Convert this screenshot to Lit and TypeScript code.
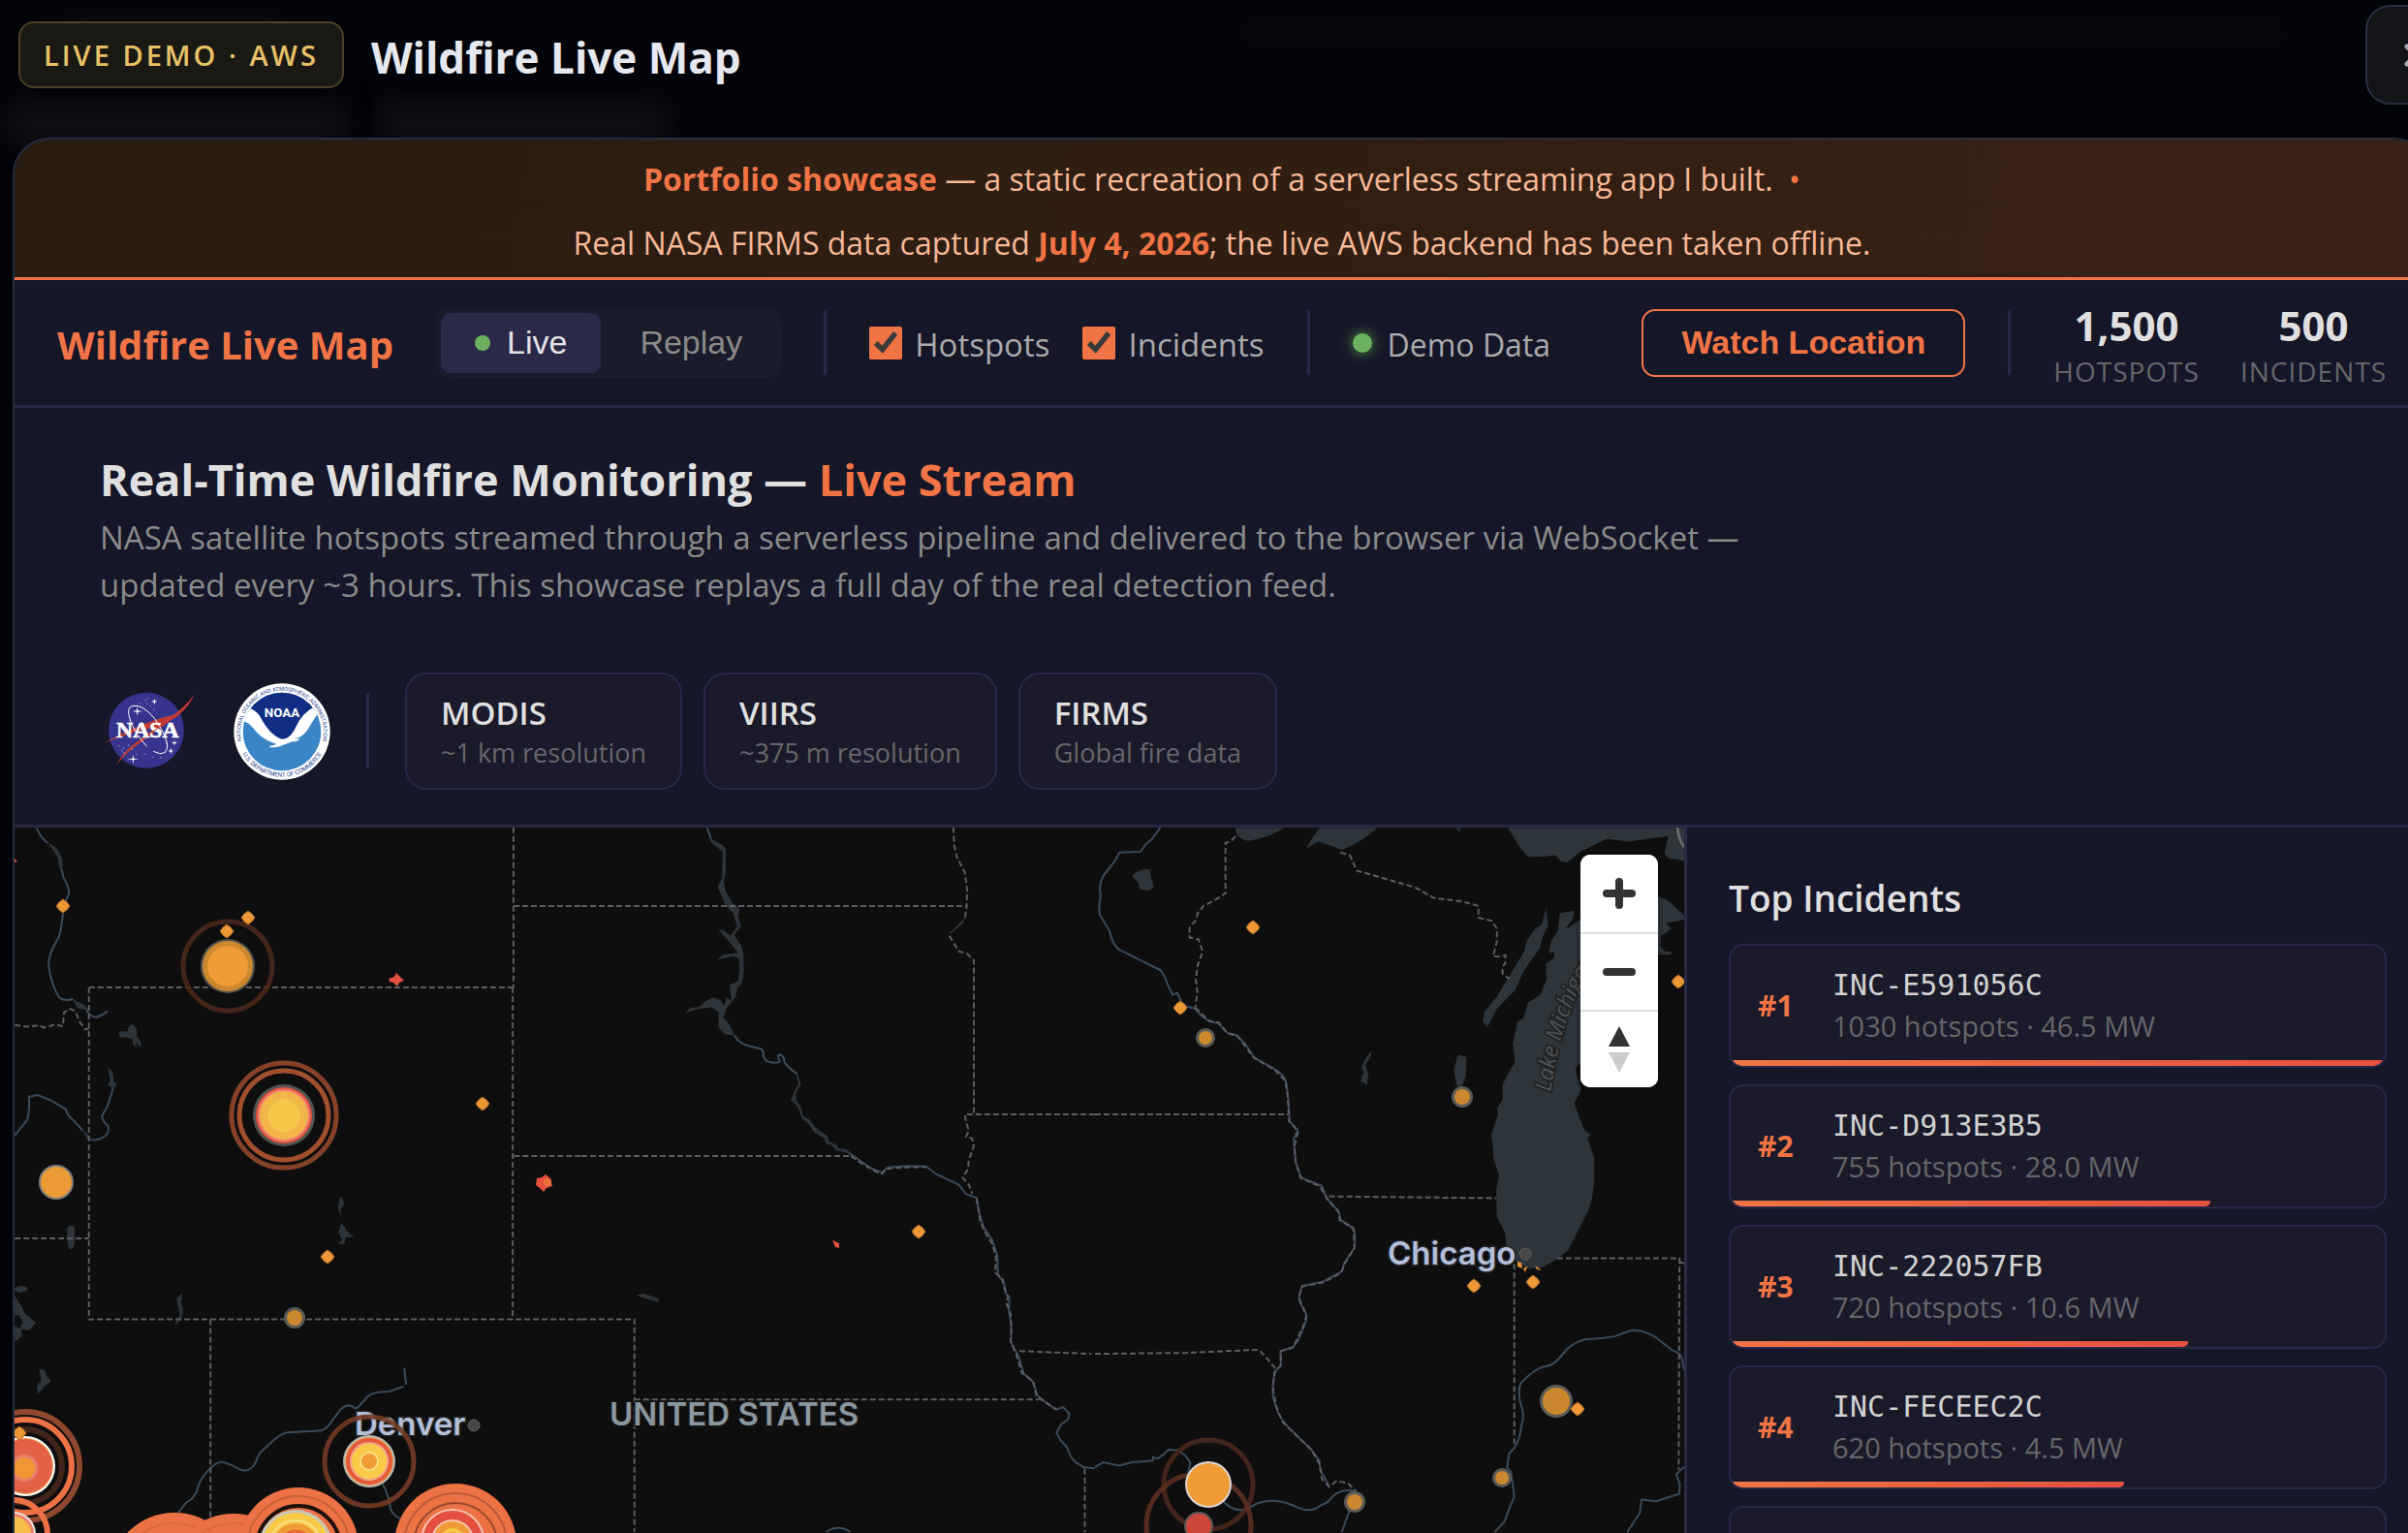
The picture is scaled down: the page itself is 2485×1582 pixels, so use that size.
import { LitElement, html, svg, css } from "lit";
import { customElement, property } from "lit/decorators.js";

interface Incident {
  id: string;
  hotspots: number;
  power: string;
}

const INCIDENTS: Incident[] = [
  { id: "INC-E591056C", hotspots: 1030, power: "46.5" },
  { id: "INC-D913E3B5", hotspots: 755, power: "28.0" },
  { id: "INC-222057FB", hotspots: 720, power: "10.6" },
  { id: "INC-FECEEC2C", hotspots: 620, power: "4.5" },
];

const SENSORS = [
  { name: "MODIS", note: "~1 km resolution" },
  { name: "VIIRS", note: "~375 m resolution" },
  { name: "FIRMS", note: "Global fire data" },
];

/* One disc or ring of a marker: radius, fill or stroke colour, stroke width (0 = filled). */
type Layer = [number, string, number?];
interface Marker {
  x: number;
  y: number;
  layers: Layer[];
}

const small = (x: number, y: number, r = 11): Marker => ({
  x,
  y,
  layers: [[r, "#5b5b57"], [r - 3, "#cb882f"]],
});

const MARKERS: Marker[] = [
  { x: 235, y: 998, layers: [[46, "#4b281c", 5], [28, "#555550"], [26, "#cb882f"], [21, "#f09b36"]] },
  {
    x: 293, y: 1152,
    layers: [[54, "#92482c", 5], [46, "#b15731", 5], [32, "#545453"], [29, "#e5533f"], [27, "#ee8274"], [25, "#f3b548"], [17, "#f5c84b"]],
  },
  { x: 58, y: 1221, layers: [[18, "#7d7d7d"], [16, "#ec9a36"]] },
  small(304, 1361),
  small(1244, 1072, 10),
  small(1509, 1133),
  small(1606, 1447, 17),
  small(1550, 1526, 10),
  small(1398, 1551),
  { x: 1247, y: 1533, layers: [[46, "#4a281d", 5]] },
  { x: 1237, y: 1576, layers: [[54, "#5c3021", 5], [15, "#5f5a58"], [13, "#cc4739"]] },
  { x: 1247, y: 1533, layers: [[24, "#dcd5d2"], [22, "#f09b36"]] },
  {
    x: 381, y: 1509,
    layers: [[46, "#743a25", 5], [27, "#b7b7b4"], [25, "#f0a04f"], [24, "#e35a3b"], [20, "#f3a78d"], [18, "#f8ca48"], [10, "#fbe184"], [8, "#f09b36"]],
  },
  {
    x: 26, y: 1514,
    layers: [[56, "#8f482e", 6], [48, "#ec7144", 6], [38, "#41251b", 6], [31, "#ffffff"], [29, "#f0a050"], [28, "#e46146"]],
  },
  { x: 25, y: 1516, layers: [[14, "#ec8070"], [11, "#f09834"]] },
  { x: 14, y: 1584, layers: [[35, "#ec7144", 6], [23, "#efe3dd"], [21, "#ef8274"], [18, "#f6bd49"]] },
  { x: 180, y: 1629, layers: [[67, "#ec7144"], [56, "#d9683e", 2]] },
  { x: 241, y: 1630, layers: [[67, "#ec7144"], [57, "#dc6a40", 2]] },
  {
    x: 308, y: 1598,
    layers: [[62, "#ec7144"], [53, "#c4603b", 2], [43, "#1b100c", 4]],
  },
  { x: 305, y: 1597, layers: [[38, "#c9c8bb"], [35, "#f8ca48"], [27, "#fbe184", 2], [24, "#f09b36"], [16, "#e9672f", 3]] },
  { x: 470, y: 1595, layers: [[63, "#ec7144"], [53, "#b9593a", 2], [43, "#93482c", 2]] },
  { x: 467, y: 1591, layers: [[33, "#f6c5b4"], [31, "#e3503f"], [22, "#f6c5b4"], [20, "#f09b36"], [11, "#f8ca48", 4]] },
];

const EMBERS: [number, number][] = [
  [65, 936], [256, 948], [234, 962], [498, 1140], [338, 1298], [20, 1480], [948, 1272],
  [1218, 1041], [1293, 958], [1732, 1014], [1521, 1328], [1582, 1324], [1628, 1455],
];

/* Map linework, drawn on three sheets that sit side by side. */
interface Sheet {
  x: number;
  borders: string;
  rivers: string;
  water: string;
}

const SHEETS: Sheet[] = [
  {
    x: 0,
    borders:
      "M1259 10V364M1259 184H1425M1259 364H218M218 364V1098H1425M1257 364V1098M1260 737H1425M36 919H218M516 1098V1568" +
      "M36 447L66 451 94 448 108 453 135 446 154 450 157 420 170 411 184 416 196 441 209 457 218 455",
    rivers:
      "M89 11Q100 34 117 45M150 100L156 122Q172 145 168 160L160 175 155 190Q152 230 145 252Q118 290 119 315Q124 355 145 386Q155 395 180 390M210 410Q220 431 238 430Q252 425 264 417" +
      "M36 691L66 658Q73 640 71 606L92 602 125 614 162 634Q165 648 178 656L203 680M215 697Q225 706 250 697 270 688 265 670 250 660 250 648L263 628 279 583" +
      "M990 1246L953 1258Q920 1256 903 1267L880 1290Q872 1298 865 1291 850 1283 834 1298L806 1332Q797 1343 780 1344L706 1348Q690 1350 675 1362L636 1394 625 1417Q612 1436 592 1431 560 1416 544 1413 528 1413 508 1434 487 1455 482 1480L471 1494 458 1502 436 1526M991 1205L996 1242" +
      "M938 1461Q956 1493 957 1517 966 1532 982 1539",
    water:
      "M117 45Q142 52 150 75 158 92 150 106 142 98 143 80 132 60 117 45ZM178 390L206 402 216 414 190 410ZM290 466Q297 458 312 462 313 446 328 446 340 458 334 472 350 485 345 496L333 485 334 498 325 488 326 478 305 474 295 475ZM264 540Q280 550 279 572L287 578 279 588 264 580 270 570ZM200 676L218 692 226 702 214 700ZM833 828Q844 826 843 845L835 855 839 874 828 852ZM836 885L845 893 850 902 867 916 848 916 844 931 828 932 839 922 830 906ZM165 896Q175 884 183 896V930Q178 945 171 943 162 930 165 896ZM36 1028Q52 1020 69 1028 66 1040 44 1038L36 1034ZM36 1046L52 1068 62 1086 88 1105 72 1122 52 1120 54 1134 36 1148V1112L48 1118 56 1104 46 1088 36 1090ZM447 1041L444 1060 449 1076 446 1094 430 1112 432 1100 441 1088 436 1068 433 1050ZM96 1207Q112 1206 114 1222L126 1235 110 1245 93 1264 90 1245 101 1233Z",
  },
  {
    x: 600,
    borders:
      "M0 184H942M912 10L914 50 920 75 940 110 946 150 944 190 940 212M902 250L925 284 945 289 962 304V645M1259 645H940L944 665 950 680 943 694 958 698 962 715 950 745 948 765 935 785 950 800 958 820" +
      "M0 737H661M661 737L690 755 720 770 738 776 745 765 790 762 845 761M0 1098H130V1568M130 1275H1122M1074 1168L1250 1174M1234 1428V1568" +
      "M969 830L977 878 991 908 1007 930 1016 958 1015 995 1032 1008 1037 1030 1046 1045 1042 1062 1052 1085 1054 1125 1052 1146 1066 1175 1080 1217 1107 1234 1116 1268 1166 1298",
    rivers:
      "M308 11L318 36M376 470Q383 485 402 491L440 500Q448 504 446 515 448 527 462 529 478 533 487 528 478 516 485 513 497 513 498 530 508 543 530 556" +
      "M650 726L680 745 710 764 738 774 750 762 795 759 845 760 870 777 925 800 943 821 968 829 975 860 985 893 1007 922 1020 958 1021 1000 1036 1016 1040 1040 1049 1050 1048 1078 1054 1110 1053 1148 1072 1180 1084 1217 1108 1237 1118 1266 1140 1283 1165 1297 1181 1292 1196 1306 1194 1318 1176 1330 1165 1349 1174 1364 1190 1380 1200 1402 1212 1414 1233 1425 1259 1427" +
      "M600 1568Q630 1550 660 1568",
    water:
      "M314 34L346 50 354 58V110L349 128 353 150 370 178 388 190 384 205 391 230 374 248 392 272 398 292 398 330 394 355 382 365 378 385 356 410 348 430 362 445 376 470 352 468 336 452V418L320 408 282 413 255 420 265 410 290 407 305 394 322 386 340 392 350 405 356 385 368 395 364 358 384 350 388 325 386 300 372 295 330 303 350 292 384 287 358 258 336 238 346 236 366 250 382 230 372 200 352 182 342 158 334 142 345 122 346 64 316 42Z" +
      "M530 555L538 578 525 600 527 615 538 628 543 648 558 655 575 675 602 692 607 704 625 712 630 720 650 722 660 732 640 727 624 724 612 712 600 710 595 698 572 685 555 664 540 654 532 630 513 612 520 598 533 576 527 562Z" +
      "M134 1044L152 1041 190 1052 187 1060 165 1054ZM940 210L936 222 905 246 901 244 915 233Z",
  },
  {
    x: 1130,
    borders:
      "M345 30L334 40 320 45V156L300 168 266 184 252 200 248 215 232 232V254L254 258 264 285 252 315 247 345 251 375 246 409M0 645H473M574 826L984 830M1133 963H1433L1431 1430M1433 970L1445 975M1028 975V1380" +
      "M602 66L625 72 642 106 785 143 830 166 900 174 940 184V210L973 217 986 235 985 265 976 295 990 296 1006 293V310L998 320 1000 335 1016 345" +
      "M0 1174L220 1172 402 1165 425 1188 444 1208M246 409L280 438 304 442 325 466 348 470 390 520 440 546 466 570 472 600 476 660 498 683 489 715 492 750 504 785 552 804 568 830 598 862 600 878 634 898 636 940 612 975 604 995 560 1016 508 1025 500 1050 518 1090 512 1110 486 1160 456 1168 455 1200 440 1215 436 1250 444 1290 460 1325 498 1358 530 1385 552 1420 556 1450 574 1468 592 1455 620 1460 640 1478",
    rivers:
      "M160 11L140 36 124 48 112 64 60 66Q50 86 30 106 6 130 14 160 6 200 16 210L36 240Q42 270 60 281L160 326Q170 335 178 358L190 380 202 377 212 396 224 406 244 410 262 428 282 440 302 443 324 464 347 470 368 488 390 519 437 543Q464 556 469 575L475 620 477 660 497 680 487 700 492 750 506 785 556 803 568 830 598 860 602 878 632 895Q640 905 636 940L612 972 605 992 560 1014 508 1024Q495 1055 505 1065 525 1090 516 1105L498 1145 484 1160 455 1168 456 1200 442 1213Q430 1260 442 1285 450 1320 490 1350L532 1388 550 1410 552 1430 574 1466" +
      "M0 1424L20 1414 60 1421 90 1414 142 1410 142 1402 152 1406 165 1399 180 1386 202 1387 222 1399 234 1414 228 1440M316 1502Q345 1527 375 1516 400 1500 430 1499 460 1497 495 1513 530 1528 555 1508 570 1505 582 1490 605 1470 638 1478M626 1515L605 1568" +
      "M1445 1212L1438 1180Q1430 1170 1415 1166L1375 1138Q1345 1120 1315 1122L1275 1135Q1250 1140 1200 1142 1175 1150 1160 1161L1138 1184Q1120 1202 1100 1202 1075 1210 1048 1235 1036 1245 1042 1280 1055 1310 1046 1330 1042 1365 1028 1382L1016 1394 1010 1425 1020 1435 1028 1490 1014 1520 1004 1545 980 1568M1445 1424L1425 1440 1434 1462 1432 1484 1375 1500 1340 1496 1336 1525 1305 1568",
    water:
      "M345 11H465Q420 36 375 40 350 36 345 20ZM550 11H692Q660 40 605 60 575 50 548 42L518 57 530 38ZM885 11H898L892 22ZM1012 11H1445V86Q1430 80 1408 80L1396 70 1405 30 1370 34 1310 42 1255 36 1190 64 1158 88 1140 84 1130 72 1100 75 1062 76 1046 60Z" +
      "M90 118Q112 98 135 104L138 122 144 142 132 150 110 148 106 132ZM678 504L676 518 663 536 670 555 667 580 652 572 654 560 660 552 653 542 664 520ZM890 513L911 518 909 560 898 587 886 580 880 545Z" +
      "M1106 187L1111 230Q1095 250 1092 275L1050 330 1030 370 985 412 962 452 950 440 955 418 985 385 1015 340 1052 285 1058 262 1078 235 1096 225Z" +
      "M1140 200L1175 195 1170 215 1152 236 1195 212H1240V420L1190 530 1178 545 1192 590 1175 620 1200 680 1216 690 1208 696 1224 742V790Q1220 840 1208 860L1180 910 1160 945 1132 965 1098 983 1060 986 1022 965 1008 930 1005 905 985 870 984 810 991 780 978 745 972 690 988 645 986 632 1000 610 999 580 1018 545 1030 530 1024 490 1036 440 1050 432 1062 398 1092 380 1108 345 1105 312 1126 298V285L1112 290 1118 262 1135 238Z" +
      "M1378 160L1410 175 1445 206V214L1400 222 1412 235 1388 250 1386 272 1395 284 1416 286 1408 292H1340V160Z",
  },
];

@customElement("fire-map")
class FireMap extends LitElement {
  static styles = css`
    :host { display: block; position: relative; min-width: 0; overflow: hidden; background: #0e0e0e; }
    .canvas { display: block; width: 100%; height: 100%; }
    .border { fill: none; stroke: #5c5d62; stroke-width: 2; stroke-dasharray: 6 3; vector-effect: non-scaling-stroke; }
    .river { fill: none; stroke: #3b4b5a; stroke-width: 2; vector-effect: non-scaling-stroke; }
    .water { fill: #2d343a; }
    .isle { fill: #0e0e0e; }
    .edge { fill: none; stroke: #66686a; stroke-width: 3; }
    .city { font: 600 33px Inter, sans-serif; fill: #b4c0d9; stroke: #22252b; stroke-width: 3; paint-order: stroke; }
    .country { font: 600 33px Inter, sans-serif; fill: #8a979f; stroke: #141517; stroke-width: 3; paint-order: stroke; }
    .lake { font: italic 400 23px "Open Sans", sans-serif; fill: #505255; stroke: #202325; stroke-width: 4; paint-order: stroke; }
    .dot { fill: #474747; stroke: #5d5d5f; stroke-width: 1; }
    .controls {
      position: absolute; top: 28px; right: 27px; width: 80px;
      display: flex; flex-direction: column; overflow: hidden;
      border-radius: 10px; background: #fff; box-shadow: 0 0 0 5px rgb(0 0 0 / 10%);
    }
    .control { height: 80px; padding: 0; border: 0; background: #fff; display: grid; place-items: center; }
    .control + .control { border-top: 2px solid #ddd; }
    .glyph { width: 72px; height: 72px; display: block; }
  `;

  render() {
    return html`
      <svg class="canvas" viewBox="15 855 1723 735" preserveAspectRatio="xMinYMin slice" role="img" aria-label="Wildfire map">
        ${SHEETS.map(
          (s) => svg`<g transform="translate(${s.x} 850) scale(0.42092 0.46684)">
            <path class="river" d=${s.rivers}></path>
            <path class="water" d=${s.water}></path>
            <path class="border" d=${s.borders}></path>
          </g>`
        )}
        <path class="isle" d="M1571 1020l16 -25 9 -10 -1 7 -6 12 -5 14 -8 14 -6 3zM1598 984l6 1 -1 5 -6 -1z"></path>
        <path class="edge" d="M1731 855q2 14 7 20"></path>
        <path id="shore" d="M1600 1128Q1608 1074 1625 1032Q1640 1000 1664 965" fill="none"></path>
        <text class="lake"><textPath href="#shore">Lake Michigan</textPath></text>
        <circle class="dot" cx="489" cy="1472" r="6"></circle>
        <circle class="dot" cx="1574" cy="1295" r="6"></circle>
        <text class="city" x="366" y="1482">Denver</text>
        <text class="city" x="1432" y="1306">Chicago</text>
        <text class="country" x="629" y="1472">UNITED STATES</text>
        <g fill="#e3503f">
          <path d="M401 1011l6 -2 2 -4 6 6 2 2 -5 2 -2 4 -4 -4 -4 -1z"></path>
          <path d="M554 1217l5 -1 4 -3 5 4 2 8 -6 2 -3 4 -4 -4 -4 -3z"></path>
          <path d="M859 1281l7 3 0 5 -4 -1z"></path>
          <path d="M15 887l3 3 -3 1z"></path>
        </g>
        <circle cx="565" cy="1221" r="4" fill="#ec7038"></circle>
        <path d="M1566 1303l4 1 1 6 -5 -2zM1572 1310l4 -2 -2 6zM1584 1307l7 5 -5 -1z" fill="#ee9438"></path>
        ${MARKERS.map((m) =>
          m.layers.map(([r, color, width]) =>
            width
              ? svg`<circle cx=${m.x} cy=${m.y} r=${r} fill="none" stroke=${color} stroke-opacity=${width === 5 ? 0.9 : 1} stroke-width=${width}></circle>`
              : svg`<circle cx=${m.x} cy=${m.y} r=${r} fill=${color}></circle>`
          )
        )}
        ${EMBERS.map(
          ([x, y]) => svg`<path transform="translate(${x} ${y})" fill="#ee9737" stroke="#a86c2b" stroke-width="1" d="M0 -7L4 -4 7 0 4 4 0 7 -4 4 -7 0 -4 -4Z"></path>`
        )}
      </svg>
      <div class="controls">
        <button class="control" type="button" aria-label="Zoom in">
          <svg class="glyph" viewBox="0 0 72 72"><path d="M36 24V48M23 36H49" fill="none" stroke="#333" stroke-width="8" stroke-linecap="round"></path></svg>
        </button>
        <button class="control" type="button" aria-label="Zoom out">
          <svg class="glyph" viewBox="0 0 72 72"><path d="M23 36H49" fill="none" stroke="#333" stroke-width="8" stroke-linecap="round"></path></svg>
        </button>
        <button class="control" type="button" aria-label="Reset bearing">
          <svg class="glyph" viewBox="0 0 72 72"><path d="M25 33L36 12 47 33Z" fill="#333"></path><path d="M25 39H47L36 60Z" fill="#ccc"></path></svg>
        </button>
      </div>
    `;
  }
}

@customElement("incident-card")
class IncidentCard extends LitElement {
  @property({ type: Number }) rank = 0;
  @property({ attribute: false }) incident?: Incident;
  @property({ type: Number }) peak = 1;

  static styles = css`
    :host {
      display: block; position: relative; box-sizing: border-box; min-height: 128px; flex: none;
      border: 2px solid #2a2847; border-radius: 15px; background: #1a1a2b; overflow: hidden;
    }
    .row { display: grid; grid-template-columns: 50px 1fr; gap: 27px; align-items: center; padding: 20px 28px; line-height: 42px; }
    .rank { font-size: 30px; font-weight: 700; color: #f07445; }
    .id { font-family: "DejaVu Sans Mono", monospace; font-size: 30px; color: #d2d2d2; }
    .meta { font-size: 29px; color: #66666a; }
    .bar { position: absolute; left: 0; bottom: 0; height: 6px; border-radius: 0 0 5px 0; background: linear-gradient(90deg, #f07545, #e65040); }
  `;

  render() {
    const it = this.incident;
    if (!it) return html``;
    return html`
      <div class="row">
        <span class="rank">#${this.rank}</span>
        <div>
          <div class="id">${it.id}</div>
          <div class="meta">${it.hotspots} hotspots · ${it.power} MW</div>
        </div>
      </div>
      <div class="bar" style="width:${(it.hotspots / this.peak) * 100}%"></div>
    `;
  }
}

@customElement("app-root")
class AppRoot extends LitElement {
  static styles = css`
    :host {
      display: flex; flex-direction: column; position: relative; height: 100vh; overflow: hidden;
      background: #020308; color: #e0e0e0; font-family: "Open Sans", "Noto Sans", sans-serif;
    }
    * { box-sizing: border-box; }
    h1, h2, h3, p, ul { margin: 0; padding: 0; }
    button { font-family: "Liberation Sans", Arial, sans-serif; }

    .haze { position: absolute; border-radius: 12px; filter: blur(12px); background: #0e0f14; }
    .haze.title { left: 8px; top: 104px; width: 350px; height: 48px; }
    .haze.title2 { left: 390px; top: 104px; width: 300px; height: 48px; }
    .haze.brand { left: 60px; top: 16px; width: 240px; height: 36px; background: #090a0e; }
    .haze.nav { left: 1280px; top: 20px; width: 1080px; height: 28px; background: #06070b; }

    .topbar { position: relative; display: flex; align-items: center; gap: 28px; margin: 5px -60px 34px 19px; }
    .badge {
      padding: 0 24px; line-height: 65px; border: 2px solid #4d4127; border-radius: 16px;
      background: #1b1914; color: #e8c268; font-size: 29px; font-weight: 600; letter-spacing: 3px;
    }
    .heading { padding-top: 4px; font-size: 44px; line-height: 60px; font-weight: 700; color: #e6e8ef; }
    .close {
      margin-left: auto; width: 104px; height: 103px; padding: 0; display: grid; place-items: center;
      border: 2px solid #262f40; border-radius: 26px; background: #131418;
    }
    .close svg { width: 26px; height: 26px; }

    .panel {
      position: relative; flex: 1; min-height: 0; display: flex; flex-direction: column;
      margin: 0 -24px 0 13px; border: 2px solid #262d40; border-bottom: 0;
      border-radius: 38px 38px 0 0; overflow: hidden; background: #151627;
    }
    .notice {
      padding: 8px 0 2px; text-align: center; font-size: 32px; line-height: 66px; color: #f8b896;
      border-bottom: 3px solid #f07445; background: linear-gradient(100deg, #281c13, #301e13 50%, #392115);
    }
    .notice strong, .notice .sep { color: #f07445; }
    .notice .sep { margin-left: 8px; }

    .toolbar { display: flex; align-items: center; gap: 44px; min-height: 132px; padding: 0 44px; border-bottom: 3px solid #2a2847; }
    .brand { padding-top: 5px; font-size: 40px; line-height: 56px; font-weight: 700; color: #f07445; white-space: nowrap; }
    .rule { width: 3px; height: 66px; background: #2a2847; flex: none; }
    .modes { display: flex; gap: 5px; padding: 5px; border-radius: 15px; background: #1a1b2b; }
    .mode {
      display: flex; align-items: center; gap: 17px; height: 62px; padding: 0 35px; border: 0; border-radius: 10px;
      background: transparent; color: #8a8a8a; font-size: 34px;
    }
    .mode.on { background: #2b2948; color: #e4e4e4; }
    .led { width: 16px; height: 16px; border-radius: 50%; background: #6bb15f; }
    .checks { display: flex; gap: 34px; }
    .check { display: flex; align-items: center; gap: 13px; font-size: 33px; line-height: 50px; color: #aaaaad; }
    .check span, .feed .name { padding-top: 5px; }
    .check input { margin: 0; width: 34px; height: 34px; accent-color: #f07445; }
    .feed { display: flex; align-items: center; gap: 16px; font-size: 32px; line-height: 50px; color: #aaaaad; white-space: nowrap; }
    .feed .led { width: 20px; height: 20px; box-shadow: 0 0 14px #5c9a54; }
    .watch {
      margin-left: auto; height: 70px; padding: 0 39px; border: 2px solid #f07445; border-radius: 14px;
      background: transparent; color: #f07445; font-size: 34px; font-weight: 700; white-space: nowrap;
    }
    .stats { display: flex; gap: 42px; padding-top: 7px; text-align: center; }
    .value { font-size: 42px; line-height: 52px; font-weight: 700; }
    .label { font-size: 28px; line-height: 42px; color: #66666a; letter-spacing: 1px; }

    .hero { padding: 44px 88px 36px; border-bottom: 3px solid #2a2847; }
    .hero h1 { font-size: 45px; line-height: 60px; font-weight: 700; }
    .hero h1 span { color: #f07445; }
    .hero p { max-width: 1750px; margin-top: 5px; font-size: 33px; line-height: 49px; color: #8a8a8c; }
    .sources { display: flex; align-items: center; gap: 37px; margin-top: 66px; }
    .nasa { width: 101px; height: 82px; }
    .noaa { width: 100px; height: 100px; }
    .sources .rule { height: 77px; }
    .chips { display: flex; gap: 22px; }
    .chip { padding: 18px 35px 17px; border: 2px solid #2a2847; border-radius: 22px; background: #1a1a2b; }
    .chip h3 { font-size: 33px; line-height: 44px; font-weight: 600; }
    .chip div { font-size: 27px; line-height: 38px; color: #66666a; }

    .body { flex: 1; min-height: 0; display: grid; grid-template-columns: minmax(0, 1fr) 769px; grid-template-rows: minmax(0, 1fr); }
    .side { display: flex; flex-direction: column; overflow: hidden; padding: 48px 44px 0 43px; border-left: 3px solid #2a2847; }
    .side h2 { margin-bottom: 22px; font-size: 37px; line-height: 50px; font-weight: 600; }
    .list { display: flex; flex-direction: column; gap: 17px; }
  `;

  render() {
    return html`
      <div class="haze title"></div>
      <div class="haze title2"></div>
      <div class="haze brand"></div>
      <div class="haze nav"></div>

      <header class="topbar">
        <span class="badge">LIVE DEMO · AWS</span>
        <h2 class="heading">Wildfire Live Map</h2>
        <button class="close" type="button" aria-label="Close">
          <svg viewBox="0 0 26 26"><path d="M4 4L22 22M22 4L4 22" fill="none" stroke="#a4abba" stroke-width="5" stroke-linecap="round"></path></svg>
        </button>
      </header>

      <section class="panel">
        <div class="notice">
          <div><strong>Portfolio showcase</strong> — a static recreation of a serverless streaming app I built. <span class="sep">•</span></div>
          <div>Real NASA FIRMS data captured <strong>July 4, 2026</strong>; the live AWS backend has been taken offline.</div>
        </div>

        <div class="toolbar">
          <div class="brand">Wildfire Live Map</div>
          <div class="modes">
            <button class="mode on" type="button"><span class="led"></span>Live</button>
            <button class="mode" type="button">Replay</button>
          </div>
          <span class="rule"></span>
          <div class="checks">
            <label class="check"><input type="checkbox" checked /><span>Hotspots</span></label>
            <label class="check"><input type="checkbox" checked /><span>Incidents</span></label>
          </div>
          <span class="rule"></span>
          <div class="feed"><span class="led"></span><span class="name">Demo Data</span></div>
          <button class="watch" type="button">Watch Location</button>
          <span class="rule"></span>
          <div class="stats">
            <div><div class="value">1,500</div><div class="label">HOTSPOTS</div></div>
            <div><div class="value">500</div><div class="label">INCIDENTS</div></div>
          </div>
        </div>

        <div class="hero">
          <h1>Real-Time Wildfire Monitoring — <span>Live Stream</span></h1>
          <p>NASA satellite hotspots streamed through a serverless pipeline and delivered to the browser via WebSocket — updated every ~3 hours. This showcase replays a full day of the real detection feed.</p>
          <div class="sources">
            ${this.nasaLogo()} ${this.noaaLogo()}
            <span class="rule"></span>
            <div class="chips">
              ${SENSORS.map((s) => html`<div class="chip"><h3>${s.name}</h3><div>${s.note}</div></div>`)}
            </div>
          </div>
        </div>

        <div class="body">
          <fire-map></fire-map>
          <aside class="side">
            <h2>Top Incidents</h2>
            <div class="list">
              ${INCIDENTS.map(
                (it, i) => html`<incident-card .rank=${i + 1} .incident=${it} .peak=${INCIDENTS[0].hotspots}></incident-card>`
              )}
              <incident-card></incident-card>
            </div>
          </aside>
        </div>
      </section>
    `;
  }

  private nasaLogo() {
    return html`
      <svg class="nasa" viewBox="39 130 303 246" role="img" aria-label="NASA">
        <circle cx="183" cy="249" r="117" fill="#36348c"></circle>
        <path d="M333 137Q312 180 280 205 250 224 228 240L188 244Q150 250 52 288 100 262 160 236 230 208 265 202 300 180 333 137Z" fill="#bf3a32"></path>
        <path d="M232 234Q205 258 172 282 120 316 91 356 110 314 160 280 200 252 232 224Z" fill="#bf3a32"></path>
        <path d="M185 299Q150 262 134 220 118 176 142 173 172 168 208 212 240 256 248 292 250 322 224 321L205 314" fill="none" stroke="#fff" stroke-width="3"></path>
        <g fill="#fff">
          <path d="M155 175l2 13 14 2 -14 2 -2 13 -2 -13 -14 -2 14 -2zM208 150l2 8 8 2 -8 2 -2 8 -2 -8 -8 -2 8 -2zM142 323l2 13 16 2 -16 2 -2 11 -2 -11 -16 -2 16 -2zM259 303l2 8 7 2 -7 2 -2 8 -2 -8 -7 -2 7 -2zM270 279l2 7 8 2 -8 2 -2 7 -2 -7 -8 -2 8 -2z"></path>
          ${[[180, 156], [187, 150], [165, 166], [196, 172], [206, 184], [184, 166], [98, 297], [112, 304], [108, 312], [127, 296], [140, 307], [114, 318], [180, 322], [205, 331], [228, 334], [240, 318], [246, 290], [152, 322]].map(
            ([x, y]) => svg`<circle cx=${x} cy=${y} r="1.5"></circle>`
          )}
        </g>
        <text x="187" y="272" text-anchor="middle" font-family="Liberation Serif, serif" font-weight="700" font-size="71" fill="#fff" stroke="#fff" stroke-width="2">NASA</text>
        <path d="M234 226Q212 246 190 262L184 268Q212 250 236 230Z" fill="#bf3a32"></path>
      </svg>
    `;
  }

  private noaaLogo() {
    return html`
      <svg class="noaa" viewBox="452 104 300 300" role="img" aria-label="NOAA">
        <defs>
          <path id="ringTop" d="M480 294A128 128 0 1 1 724 294"></path>
          <path id="ringBottom" d="M469 300A141 141 0 0 0 735 300"></path>
          <clipPath id="disc"><circle cx="602" cy="254" r="121"></circle></clipPath>
        </defs>
        <circle cx="602" cy="254" r="149" fill="#fff"></circle>
        <g clip-path="url(#disc)">
          <rect x="480" y="130" width="244" height="250" fill="#3a85c6"></rect>
          <path d="M480 130H724V180L696 190Q668 218 655 250 640 275 612 284L592 282Q560 262 540 225 530 200 500 184L480 180Z" fill="#102e83"></path>
          <path d="M470 170Q515 180 533 205 555 248 580 266 598 280 612 276 632 270 648 234 664 198 700 178L735 168V190L710 202Q694 226 680 250 664 272 640 276L658 277Q650 285 634 285L604 296Q590 304 565 303L563 299Q580 296 584 292 540 280 512 242 494 218 470 224Z" fill="#fff"></path>
        </g>
        <text x="602" y="210" text-anchor="middle" font-family="Roboto, sans-serif" font-weight="700" font-size="40" fill="#fff">NOAA</text>
        <g font-family="Roboto, sans-serif" fill="#2b4490" text-anchor="middle">
          <text font-size="17"><textPath href="#ringTop" startOffset="50%">NATIONAL OCEANIC AND ATMOSPHERIC ADMINISTRATION</textPath></text>
          <text font-size="19"><textPath href="#ringBottom" startOffset="50%">U.S. DEPARTMENT OF COMMERCE</textPath></text>
        </g>
      </svg>
    `;
  }
}
